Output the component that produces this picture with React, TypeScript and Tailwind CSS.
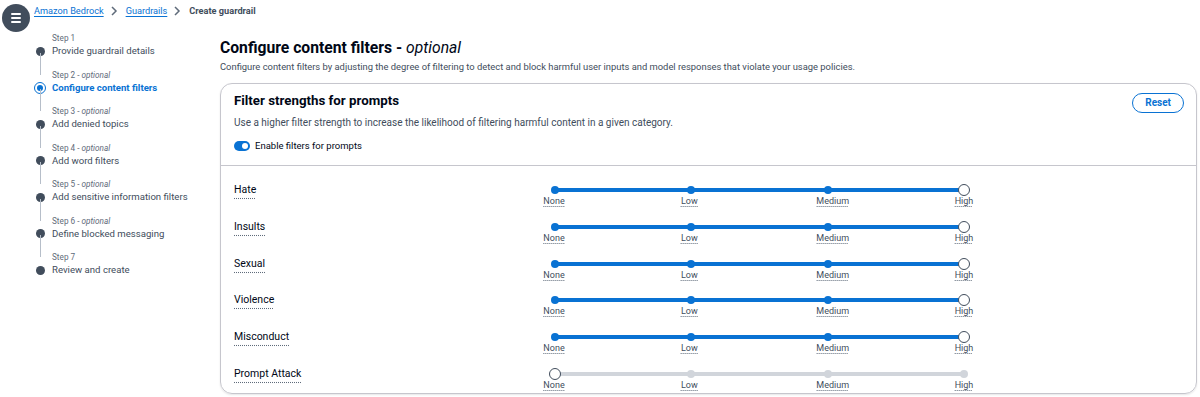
import React from "react";

const steps = [
  { n: "Step 1", opt: false, title: "Provide guardrail details", active: false },
  { n: "Step 2", opt: true, title: "Configure content filters", active: true },
  { n: "Step 3", opt: true, title: "Add denied topics", active: false },
  { n: "Step 4", opt: true, title: "Add word filters", active: false },
  { n: "Step 5", opt: true, title: "Add sensitive information filters", active: false },
  { n: "Step 6", opt: true, title: "Define blocked messaging", active: false },
  { n: "Step 7", opt: false, title: "Review and create", active: false },
];

const rows = [
  { label: "Hate", on: true },
  { label: "Insults", on: true },
  { label: "Sexual", on: true },
  { label: "Violence", on: true },
  { label: "Misconduct", on: true },
  { label: "Prompt Attack", on: false },
];

const ticks = ["None", "Low", "Medium", "High"];
const pos = ["left-[0%]", "left-[33.333%]", "left-[66.667%]", "left-[100%]"];
const labelPos = ["left-[-1px]", "left-[calc(33.333%-2px)]", "left-[calc(66.667%+5px)]", "left-[100%]"];

function Slider({ on }: { on: boolean }) {
  return (
    <div className="relative w-[409px] h-[24px] ml-[321px]">
      <div
        className={`absolute left-0 right-0 top-[3px] h-[4px] rounded-full ${
          on ? "bg-[#0972d3]" : "bg-[#d1d5db]"
        }`}
      />
      {ticks.map((t, i) => {
        const isThumb = on ? i === 3 : i === 0;
        return (
          <React.Fragment key={t}>
            {isThumb ? (
              <div
                className={`absolute ${pos[i]} top-[-1px] w-[12px] h-[12px] -translate-x-1/2 rounded-full bg-white border-[1.5px] border-[#414d5c]`}
              />
            ) : (
              <div
                className={`absolute ${pos[i]} top-[1px] w-[8px] h-[8px] -translate-x-1/2 rounded-full ${
                  on ? "bg-[#0972d3]" : "bg-[#d1d5db]"
                }`}
              />
            )}
            <span
              className={`absolute ${labelPos[i]} top-[10px] -translate-x-1/2 text-[9px] leading-[12px] text-[#414d5c] underline decoration-dotted decoration-[#5f6b7a] underline-offset-[2px]`}
            >
              {t}
            </span>
          </React.Fragment>
        );
      })}
    </div>
  );
}

export default function App() {
  return (
    <div
      className="w-[1200px] h-[397px] bg-white overflow-hidden text-[#000716]"
      style={{ fontFamily: 'Roboto, "Open Sans", sans-serif' }}
    >
      {/* Top row: menu + breadcrumb */}
      <div className="flex items-start">
        <div className="ml-[2px] mt-[4px] w-[28px] h-[28px] rounded-full bg-[#414d5c] flex flex-col items-center justify-center gap-[2px]">
          <span className="block w-[10px] h-[2px] bg-white rounded" />
          <span className="block w-[10px] h-[2px] bg-white rounded" />
          <span className="block w-[10px] h-[2px] bg-white rounded" />
        </div>
        <nav className="ml-[4px] mt-[3px] flex items-center text-[9.2px] leading-[16px]">
          <span className="text-[#0972d3] underline underline-offset-[2px]">Amazon Bedrock</span>
          <svg width="22" height="16" viewBox="0 0 22 16">
            <path d="M8 4l4 4-4 4" fill="none" stroke="#5f6b7a" strokeWidth="1.5" />
          </svg>
          <span className="text-[#0972d3] underline underline-offset-[2px]">Guardrails</span>
          <svg width="22" height="16" viewBox="0 0 22 16">
            <path d="M8 4l4 4-4 4" fill="none" stroke="#5f6b7a" strokeWidth="1.5" />
          </svg>
          <span className="text-[#414d5c] font-bold">Create guardrail</span>
        </nav>
      </div>

      <div className="flex">
        {/* Side navigation */}
        <div className="w-[220px] shrink-0 pl-[35px] pt-0">
          {steps.map((s, i) => (
            <div key={s.n} className="relative flex">
              <div className="relative w-[17px]">
                {i > 0 && (
                  <div className="absolute top-[-16px] h-[22px] w-[1px] bg-[#b6bec9] left-[5px]" />
                )}
                {i < steps.length - 1 && (
                  <div className="absolute top-[20px] bottom-0 w-[1px] bg-[#b6bec9] left-[5px]" />
                )}
              </div>
              <div className="flex flex-col">
                <span className="text-[8.2px] leading-[12px] text-[#5f6b7a] h-[12px]">
                  {s.n}
                  {s.opt && (
                    <>
                      {" - "}
                      <i>optional</i>
                    </>
                  )}
                </span>
                <span
                  className={`relative text-[9.6px] leading-[14px] ${
                    s.active ? "text-[#0972d3] font-bold" : "text-[#414d5c]"
                  } mb-[10.5px]`}
                >
                  {s.active ? (
                    <span className="absolute left-[-18px] top-[1px] w-[12px] h-[12px] rounded-full border-[1.5px] border-[#0972d3] bg-white flex items-center justify-center">
                      <span className="block w-[6px] h-[6px] rounded-full bg-[#0972d3]" />
                    </span>
                  ) : (
                    <span className="absolute left-[-16.5px] top-[2.5px] w-[9px] h-[9px] rounded-full bg-[#414d5c]" />
                  )}
                  {s.title}
                </span>
              </div>
            </div>
          ))}
        </div>

        {/* Main */}
        <div className="flex-1 pr-[3px]">
          <h1 className="text-[15.7px] leading-[22px] font-bold mt-[5px]">
            Configure content filters - <i className="font-normal">optional</i>
          </h1>
          <p className="text-[9.4px] leading-[14px] text-[#414d5c] mt-[1px]">
            Configure content filters by adjusting the degree of filtering to detect and block
            harmful user inputs and model responses that violate your usage policies.
          </p>

          <div className="mt-[9px] border border-[#c6c6cd] rounded-[12px] shadow-[0_1px_2px_rgba(0,7,22,0.1)]">
            <div className="px-[13px] pt-[8px] pb-[13px] flex justify-between border-b border-[#c6c6cd]">
              <div>
                <h2 className="text-[13.3px] leading-[18px] font-bold">Filter strengths for prompts</h2>
                <p className="text-[10px] leading-[14px] text-[#414d5c] mt-[6px]">
                  Use a higher filter strength to increase the likelihood of filtering harmful
                  content in a given category.
                </p>
                <div className="flex items-center gap-[5px] mt-[10px]">
                  <span className="relative w-[16px] h-[10px] rounded-full bg-[#0972d3]">
                    <span className="absolute right-[2px] top-[2px] w-[6px] h-[6px] rounded-full bg-white" />
                  </span>
                  <span className="text-[9.5px] leading-[12px] text-[#000716]">
                    Enable filters for prompts
                  </span>
                </div>
              </div>
              <button className="self-start mt-[1px] mr-[-1px] h-[20px] px-[12px] rounded-full border-[1.5px] border-[#0972d3] text-[#0972d3] text-[10px] font-bold leading-none">
                Reset
              </button>
            </div>

            <div className="px-[13px] pt-[17px] flex flex-col gap-[10.8px]">
              {rows.map((r) => (
                <div key={r.label} className="flex items-start h-[26px]">
                  <div className="w-0 shrink-0 text-[10.5px] leading-[14px]">
                    <span className="whitespace-nowrap text-[#000716] underline decoration-dotted decoration-[#5f6b7a] underline-offset-[5px]">
                      {r.label}
                    </span>
                  </div>
                  <div className="pt-[2px]">
                    <Slider on={r.on} />
                  </div>
                </div>
              ))}
            </div>
          </div>
        </div>
      </div>
    </div>
  );
}
